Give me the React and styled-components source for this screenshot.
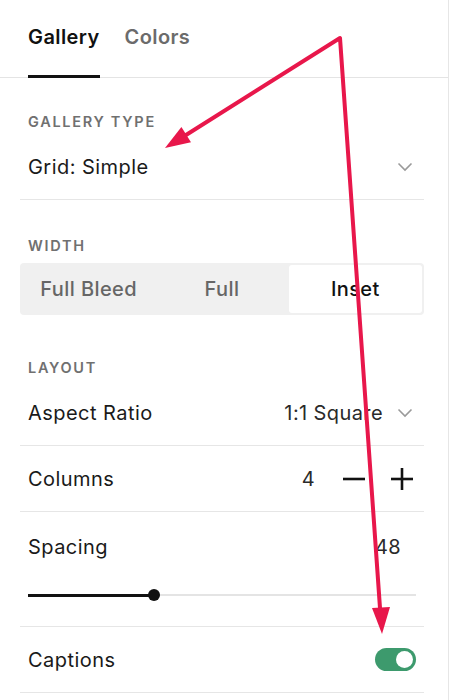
import React from "react";
import styled, { createGlobalStyle } from "styled-components";

const Global = createGlobalStyle`
  html, body { margin: 0; padding: 0; background: #fff; }
  body { font-family: Inter, "Noto Sans", "Liberation Sans", sans-serif; color: #1a1a1a; }
  * { box-sizing: border-box; }
`;

const Panel = styled.div`
  position: relative;
  width: 449px;
  height: 700px;
  border-right: 1px solid #e6e6e6;
  overflow: hidden;
`;

const TabBar = styled.div`
  display: flex;
  gap: 25px;
  height: 78px;
  padding: 0 28px;
  border-bottom: 1px solid #e4e4e4;
  margin-right: -1px;
`;

const Tab = styled.div`
  padding-top: 25px;
  margin-bottom: -1px;
  font-size: 20px;
  line-height: 24px;
  font-weight: 600;
  letter-spacing: 0.4px;
  color: ${(p) => (p.$active ? "#111" : "#6b6b6b")};
  border-bottom: 3px solid ${(p) => (p.$active ? "#111" : "transparent")};
`;

const Section = styled.div`
  margin: 0 24px 0 20px;
  padding-top: ${(p) => p.$top}px;
`;

const Label = styled.div`
  padding-left: 8px;
  font-size: 14.5px;
  line-height: 17px;
  font-weight: 600;
  letter-spacing: 1.7px;
  text-transform: uppercase;
  color: #707070;
  margin-bottom: ${(p) => p.$gap}px;
`;

const Row = styled.div`
  display: flex;
  align-items: center;
  justify-content: space-between;
  height: 66px;
  padding: 0 8px;
  border-bottom: 1px solid #e6e6e6;
  font-size: 20px;
  letter-spacing: 0.45px;
  color: #1a1a1a;
`;

const Right = styled.div`
  display: flex;
  align-items: center;
  gap: ${(p) => p.$gap || 0}px;
  margin-right: ${(p) => p.$inset || 0}px;
`;

const Value = styled.span`
  font-size: 20px;
  letter-spacing: 0.4px;
  color: #2a2a2a;
  margin-right: ${(p) => p.$space || 0}px;
`;

const Spacer = styled.span`
  width: ${(p) => p.$w}px;
`;

const Segmented = styled.div`
  display: grid;
  grid-template-columns: repeat(3, 1fr);
  height: 52px;
  padding: 2px;
  background: #f0f0f0;
  border-radius: 4px;
`;

const Segment = styled.div`
  display: flex;
  align-items: center;
  justify-content: center;
  font-size: 20px;
  font-weight: 500;
  letter-spacing: 0.4px;
  color: ${(p) => (p.$active ? "#111" : "#666")};
  background: ${(p) => (p.$active ? "#fff" : "transparent")};
  border-radius: 3px;
`;

const SpacingBlock = styled.div`
  padding: 24px 8px 0;
  height: 115px;
  border-bottom: 1px solid #e6e6e6;
`;

const SpacingHead = styled.div`
  display: flex;
  justify-content: space-between;
  align-items: center;
  height: 22px;
  font-size: 20px;
  letter-spacing: 0.45px;
  padding-right: 15px;
`;

const Track = styled.div`
  position: relative;
  margin-top: 36px;
  height: 2px;
  background: #e4e4e4;
`;

const Fill = styled.div`
  height: 3px;
  margin-top: -0.5px;
  background: #111;
  position: relative;
`;

const Knob = styled.div`
  position: absolute;
  right: -6px;
  top: -4.5px;
  width: 12px;
  height: 12px;
  border-radius: 50%;
  background: #111;
`;

const Toggle = styled.div`
  display: flex;
  align-items: center;
  justify-content: flex-end;
  width: 41px;
  height: 23px;
  padding: 3px;
  border-radius: 12px;
  background: #3d9a6d;
`;

const ToggleKnob = styled.div`
  width: 17px;
  height: 17px;
  border-radius: 50%;
  background: #fff;
`;

const Overlay = styled.svg`
  position: absolute;
  left: 0;
  top: 0;
  pointer-events: none;
`;

const Chevron = () => (
  <svg width="16" height="10" viewBox="0 0 16 10">
    <polyline points="1.5,1.5 8,8 14.5,1.5" fill="none" stroke="#9a9a9a" strokeWidth="1.6" />
  </svg>
);

const Minus = () => (
  <svg width="22" height="22" viewBox="0 0 22 22">
    <line x1="0" y1="11" x2="22" y2="11" stroke="#111" strokeWidth="2.6" />
  </svg>
);

const Plus = () => (
  <svg width="22" height="22" viewBox="0 0 22 22">
    <line x1="0" y1="11" x2="22" y2="11" stroke="#111" strokeWidth="2.6" />
    <line x1="11" y1="0" x2="11" y2="22" stroke="#111" strokeWidth="2.6" />
  </svg>
);

export default function App() {
  const pct = (154 - 28) / (416 - 28);
  return (
    <>
      <Global />
      <Panel>
        <TabBar>
          <Tab $active>Gallery</Tab>
          <Tab>Colors</Tab>
        </TabBar>

        <Section $top={35}>
          <Label $gap={4}>Gallery Type</Label>
          <Row>
            <span>Grid: Simple</span>
            <Right $inset={3}>
              <Chevron />
            </Right>
          </Row>
        </Section>

        <Section $top={37}>
          <Label $gap={9}>Width</Label>
          <Segmented>
            <Segment>Full Bleed</Segment>
            <Segment>Full</Segment>
            <Segment $active>Inset</Segment>
          </Segmented>
        </Section>

        <Section $top={44}>
          <Label $gap={4}>Layout</Label>
          <Row>
            <span>Aspect Ratio</span>
            <Right $gap={14} $inset={3}>
              <Value>1:1 Square</Value>
              <Chevron />
            </Right>
          </Row>
          <Row>
            <span>Columns</span>
            <Right $inset={3}>
              <Value $space={28}>4</Value>
              <Minus />
              <Spacer $w={26} />
              <Plus />
            </Right>
          </Row>
          <SpacingBlock>
            <SpacingHead>
              <span>Spacing</span>
              <Value>48</Value>
            </SpacingHead>
            <Track>
              <Fill style={{ width: `${pct * 100}%` }}>
                <Knob />
              </Fill>
            </Track>
          </SpacingBlock>
          <Row>
            <span>Captions</span>
            <Toggle>
              <ToggleKnob />
            </Toggle>
          </Row>
        </Section>

        <Overlay width="452" height="700" viewBox="0 0 452 700">
          <g stroke="#e8174b" strokeWidth="4" strokeLinecap="round" strokeLinejoin="round" fill="none">
            <polyline points="186,135 340,38 380,608" />
          </g>
          <polygon points="165,148 191,142.3 181.4,127.1" fill="#e8174b" />
          <polygon points="382,634 390,607 372,608" fill="#e8174b" />
        </Overlay>
      </Panel>
    </>
  );
}
